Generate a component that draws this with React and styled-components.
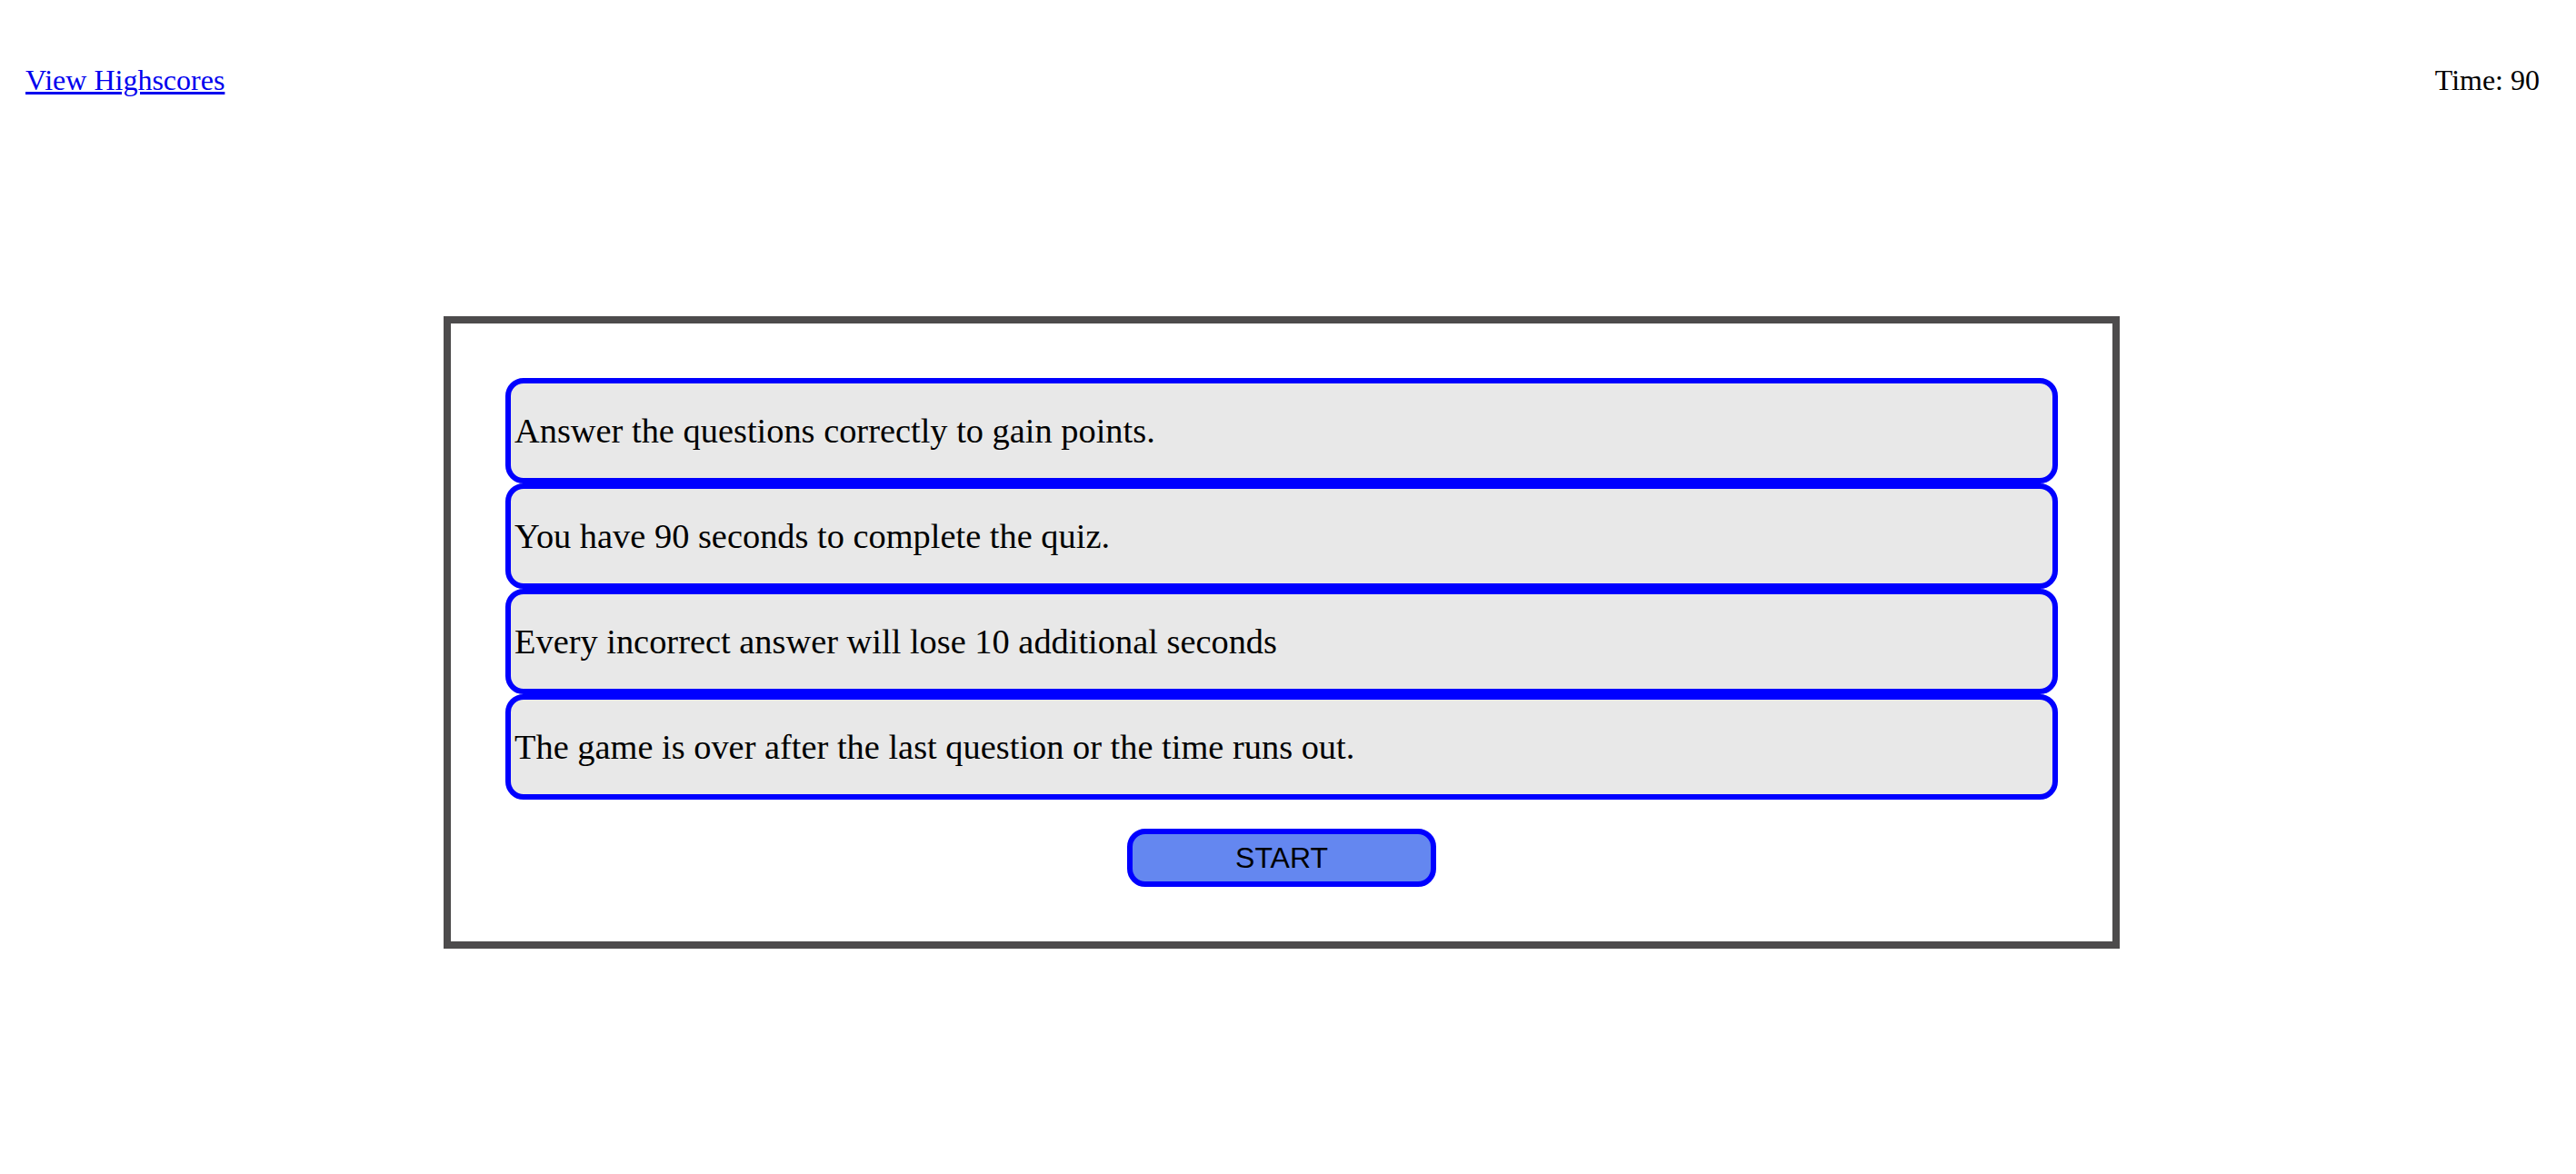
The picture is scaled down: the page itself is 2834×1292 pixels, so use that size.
import React from 'react'
import styled, { createGlobalStyle } from 'styled-components'

const GlobalStyle = createGlobalStyle`
    html, body {
        margin: 0;
        padding: 0;
        background: #ffffff;
        font-family: "Liberation Serif", "Times New Roman", serif;
        color: #000000;
    }
`;

const rules = [
    'Answer the questions correctly to gain points.',
    'You have 90 seconds to complete the quiz.',
    'Every incorrect answer will lose 10 additional seconds',
    'The game is over after the last question or the time runs out.'
];

function App() {
  return (
    <Page>
        <GlobalStyle />
        <Header>
            <HighscoreLink href="#highscores">View Highscores</HighscoreLink>
            <Timer>Time: 90</Timer>
        </Header>
        <QuizPanel>
            <RuleList>
                {rules.map((rule) => (
                    <RuleItem key={rule}>{rule}</RuleItem>
                ))}
            </RuleList>
            <StartButton type="button">START</StartButton>
        </QuizPanel>
    </Page>
  )
}

const Page = styled.div`
    width: 100%;
    min-height: 1292px;
`;

const Header = styled.header`
    display: flex;
    justify-content: space-between;
    align-items: center;
    padding: 70px 40px 0 28px;
    font-size: 32px;
    line-height: 36px;
`;

const HighscoreLink = styled.a`
    color: #0000ee;
    text-decoration: underline;
`;

const Timer = styled.span`
    color: #000;
`;

const QuizPanel = styled.section`
    width: 1844px;
    box-sizing: border-box;
    margin: 242px 0 0 488px;
    border: 8px solid #4d4b4c;
    padding: 60px;
    display: flex;
    flex-direction: column;
    align-items: center;
    gap: 32px;
`;

const RuleList = styled.ul`
    list-style: none;
    margin: 0;
    padding: 0;
    width: 100%;
    display: flex;
    flex-direction: column;
`;

const RuleItem = styled.li`
    box-sizing: border-box;
    height: 116px;
    display: flex;
    align-items: center;
    padding: 0 4px;
    background: #e8e8e8;
    border: 6px solid #0000ff;
    border-radius: 20px;
    font-size: 38.4px;
`;

const StartButton = styled.button`
    width: 340px;
    height: 64px;
    box-sizing: border-box;
    background: #6487f0;
    border: 6px solid #0000ff;
    border-radius: 20px;
    font-family: "Liberation Sans", Arial, sans-serif;
    font-size: 32px;
    color: #000;
    padding: 0;
    cursor: pointer;
`;

export default App
